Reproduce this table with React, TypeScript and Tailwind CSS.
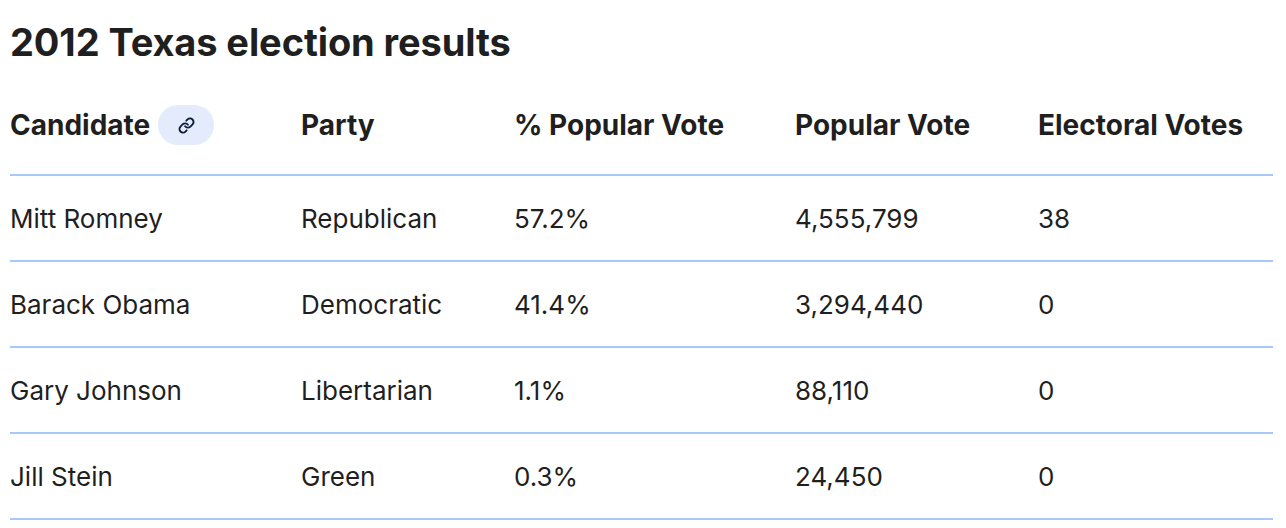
import React from "react";
import { Link } from "lucide-react";

const rows = [
  ["Mitt Romney", "Republican", "57.2%", "4,555,799", "38"],
  ["Barack Obama", "Democratic", "41.4%", "3,294,440", "0"],
  ["Gary Johnson", "Libertarian", "1.1%", "88,110", "0"],
  ["Jill Stein", "Green", "0.3%", "24,450", "0"],
];

export default function App() {
  return (
    <div className="w-[1286px] h-[528px] bg-white text-[#1f1f1f] pl-[10px] pr-[13px] overflow-hidden" style={{ fontFamily: "Inter, 'Noto Sans', sans-serif" }}>
      <div className="h-[84px] flex items-center">
        <h1 className="text-[38px] font-bold tracking-[-0.1px] leading-none">2012 Texas election results</h1>
      </div>
      <div className="grid grid-cols-[291px_213px_281px_243px_1fr] h-[92px] pb-[8px] items-center border-b-2 border-[#a8c7fa] text-[28px] font-bold">
        <div className="flex items-center gap-[8px]">
          <span>Candidate</span>
          <span className="w-[56px] h-[40px] rounded-full bg-[#e3ebfd] flex items-center justify-center text-[#0b1d3a]">
            <Link size={17} strokeWidth={2.6} />
          </span>
        </div>
        <div>Party</div>
        <div>% Popular Vote</div>
        <div>Popular Vote</div>
        <div>Electoral Votes</div>
      </div>
      {rows.map((r, i) => (
        <div key={i} className="grid grid-cols-[291px_213px_281px_243px_1fr] h-[86px] items-center border-b-2 border-[#a8c7fa] text-[26px] font-normal">
          {r.map((c, j) => (
            <div key={j}>{c}</div>
          ))}
        </div>
      ))}
    </div>
  );
}
